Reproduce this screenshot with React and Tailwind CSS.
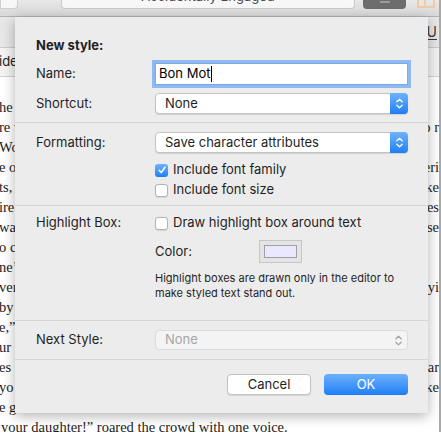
import React from "react";

const sans = "font-['Inter',sans-serif]";

function Stepper({ disabled }) {
  if (disabled) {
    return (
      <div className="w-[18px] flex items-center justify-center">
        <svg width="9" height="13" viewBox="0 0 9 13">
          <path d="M1.8 4.8 L4.5 2.2 L7.2 4.8 M1.8 8.2 L4.5 10.8 L7.2 8.2" stroke="#a3a3a3" strokeWidth="1.2" fill="none" strokeLinecap="round" strokeLinejoin="round" />
        </svg>
      </div>
    );
  }
  return (
    <div className="w-[18px] -my-px -mr-px rounded-r-[4px] bg-gradient-to-b from-[#6db3fb] to-[#1b7ef6] flex items-center justify-center">
      <svg width="9" height="13" viewBox="0 0 9 13">
        <path d="M1.8 4.8 L4.5 2.2 L7.2 4.8 M1.8 8.2 L4.5 10.8 L7.2 8.2" stroke="#ffffff" strokeWidth="1.3" fill="none" strokeLinecap="round" strokeLinejoin="round" />
      </svg>
    </div>
  );
}

function Popup({ value, disabled, h = "h-[21px]" }) {
  return (
    <div
      className={
        "flex items-stretch rounded-[4px] border " +
        h +
        (disabled
          ? " border-[#dcdcdc] bg-[#f4f4f4]"
          : " border-[#c4c4c4] bg-white shadow-[0_1px_1px_rgba(0,0,0,0.12)]")
      }
    >
      <span className={"flex-1 pl-[9px] flex items-center text-[13px] " + (disabled ? "text-[#a6a6a6]" : "text-[#1f1f1f]")}>
        {value}
      </span>
      <Stepper disabled={disabled} />
    </div>
  );
}

function Checkbox({ checked, label }) {
  return (
    <div className="h-[18px] flex items-center gap-[5px]">
      {checked ? (
        <div className="w-[13px] h-[13px] rounded-[3px] bg-gradient-to-b from-[#6db3fb] to-[#1b7ef6] flex items-center justify-center">
          <svg width="10" height="10" viewBox="0 0 10 10">
            <path d="M2.2 5.3 L4.2 7.6 L8 2.2" stroke="#fff" strokeWidth="1.5" fill="none" strokeLinecap="round" strokeLinejoin="round" />
          </svg>
        </div>
      ) : (
        <div className="w-[13px] h-[13px] rounded-[3px] bg-white border border-[#b3b3b3] shadow-[0_0.5px_1px_rgba(0,0,0,0.1)]" />
      )}
      <span className="text-[13px] text-[#1f1f1f]">{label}</span>
    </div>
  );
}

const lines = [
  ["he", ""],
  ["re w", "o r"],
  ["Wo", ""],
  ["e op", "eri"],
  ["ts, ‘", "ike"],
  ["ire", "res"],
  ["wa", "se"],
  ["o c", ""],
  ["ne’", ""],
  ["ver", "ayi"],
  ["by", ""],
  ["e,”", ""],
  ["ur c", ""],
  ["es l", "ar"],
  ["yo", "ike"],
  ["e g", ""],
];

export default function App() {
  return (
    <div className={"relative w-[441px] h-[432px] overflow-hidden bg-white " + sans}>
      {/* window right border */}
      <div className="absolute right-0 top-0 w-[2px] h-full bg-[#a9a9a9] z-20" />

      {/* toolbar */}
      <div className="h-[17px] bg-gradient-to-b from-[#e9e8e9] to-[#d9d9d9] border-b border-[#b3b3b3] flex items-start">
        <div className="w-[18px] h-[9px] bg-[#f7f7f7] border border-t-0 border-[#cfcfcf] rounded-br-[4px]" />
        <div className="ml-[43px] w-[294px] h-[9px] bg-[#f7f7f7] border border-t-0 border-[#c9c9c9] rounded-b-[4px] overflow-hidden flex justify-center">
          <span className="text-[13px] leading-[16px] -mt-[12px] text-[#4a4a4a]">Accidentally Engaged</span>
        </div>
        <div className="ml-[8px] w-[43px] h-[9px] bg-[#6d6d6d] rounded-b-[4px] flex justify-center">
          <div className="w-[10px] h-[2px] mt-[1px] bg-[#9b9b9b]" />
        </div>
        <div className="ml-[11px] w-[18px] h-[8px] border-2 border-t-0 border-[#f1cba8] flex">
          <div className="w-1/2 border-r-2 border-[#f1cba8]" />
        </div>
      </div>

      {/* format bar */}
      <div className="h-[31px] bg-[#e7e7e7] border-b border-[#cbcbcb] flex justify-end pr-[4px] pt-[6px]">
        <span className="text-[14px] leading-[18px] text-[#3a3a3a] underline underline-offset-2">U</span>
      </div>

      {/* ruler strip */}
      <div className="h-[29px] bg-[#f3f3f3] border-b border-[#d2d2d2] flex items-center">
        <span className="text-[13px] text-[#222] -ml-[1px]">ide</span>
      </div>

      {/* text */}
      <div className="pt-[20px] font-['Liberation_Serif',serif] text-[14.5px] leading-[20px] text-[#1c1c1c]">
        {lines.map(([l, r], i) => (
          <div key={i} className="flex justify-between pr-[2px] whitespace-nowrap">
            <span className="-ml-[1px]">{l}</span>
            <span>{r}</span>
          </div>
        ))}
        <div className="whitespace-nowrap pl-[1px]">your daughter!” roared the crowd with one voice.</div>
      </div>

      {/* sheet dialog */}
      <div className="absolute left-[15px] top-[17px] w-[413px] h-[396px] bg-[#ececec] shadow-[0_3px_12px_rgba(0,0,0,0.3)] z-10 flex flex-col text-[#1f1f1f]">
        {/* section 1 */}
        <div className="pl-[21px] pr-[20px] pt-[21px] pb-[8px] flex flex-col">
          <div className="h-[16px] flex items-center text-[13px] font-bold">New style:</div>
          <div className="mt-[8px] grid grid-cols-[119px_1fr] h-[24px] items-center">
            <span className="text-[13px]">Name:</span>
            <div className="h-[22px] bg-white border border-[#7ea9e6] shadow-[0_0_0_3px_#8fbaf1] flex items-center pl-[3px] text-[13px] text-black">
              Bon Mot<span className="w-px h-[16px] bg-black ml-[1px]" />
            </div>
          </div>
          <div className="mt-[7px] grid grid-cols-[119px_1fr] items-center">
            <span className="text-[13px]">Shortcut:</span>
            <Popup value="None" />
          </div>
        </div>
        <div className="h-px bg-[#d5d5d5]" />

        {/* section 2 */}
        <div className="pl-[21px] pr-[20px] pt-[9px] pb-[6px] grid grid-cols-[119px_1fr]">
          <span className="text-[13px] h-[21px] flex items-center">Formatting:</span>
          <Popup value="Save character attributes" />
          <div />
          <div className="mt-[8px] flex flex-col gap-[2px]">
            <Checkbox checked label="Include font family" />
            <Checkbox label="Include font size" />
          </div>
        </div>
        <div className="h-px bg-[#d5d5d5]" />

        {/* section 3 */}
        <div className="pl-[21px] pr-[20px] pt-[8px] pb-[19px] grid grid-cols-[119px_1fr]">
          <span className="text-[13px] h-[18px] flex items-center">Highlight Box:</span>
          <Checkbox label="Draw highlight box around text" />
          <div />
          <div className="mt-[8px] flex items-center h-[23px]">
            <span className="text-[13px] w-[104px]">Color:</span>
            <div className="w-[43px] h-[23px] bg-[#e4e4e4] border border-[#c6c6c6] flex items-center justify-center">
              <div className="w-[33px] h-[13px] bg-[#e9e8ff] border border-[#a0a0a0]" />
            </div>
          </div>
          <div />
          <p className="mt-[8px] text-[11px] leading-[15px] text-[#1f1f1f]">
            Highlight boxes are drawn only in the editor to
            <br />
            make styled text stand out.
          </p>
        </div>
        <div className="h-px bg-[#d5d5d5]" />

        {/* section 4 */}
        <div className="pl-[21px] pr-[20px] pt-[9px] pb-[9px] grid grid-cols-[119px_1fr] items-center">
          <span className="text-[13px]">Next Style:</span>
          <Popup value="None" disabled h="h-[20px]" />
        </div>
        <div className="h-px bg-[#d5d5d5]" />

        {/* buttons */}
        <div className="pr-[20px] pt-[14px] flex justify-end gap-[13px]">
          <button className="w-[84px] h-[21px] rounded-[4px] bg-white border border-[#c2c2c2] shadow-[0_1px_1px_rgba(0,0,0,0.1)] text-[13px] text-[#1f1f1f] flex items-center justify-center">
            Cancel
          </button>
          <button className="w-[84px] h-[21px] rounded-[4px] bg-gradient-to-b from-[#6bb0fb] to-[#1a7ef6] text-[13px] text-white flex items-center justify-center">
            OK
          </button>
        </div>
      </div>
    </div>
  );
}
